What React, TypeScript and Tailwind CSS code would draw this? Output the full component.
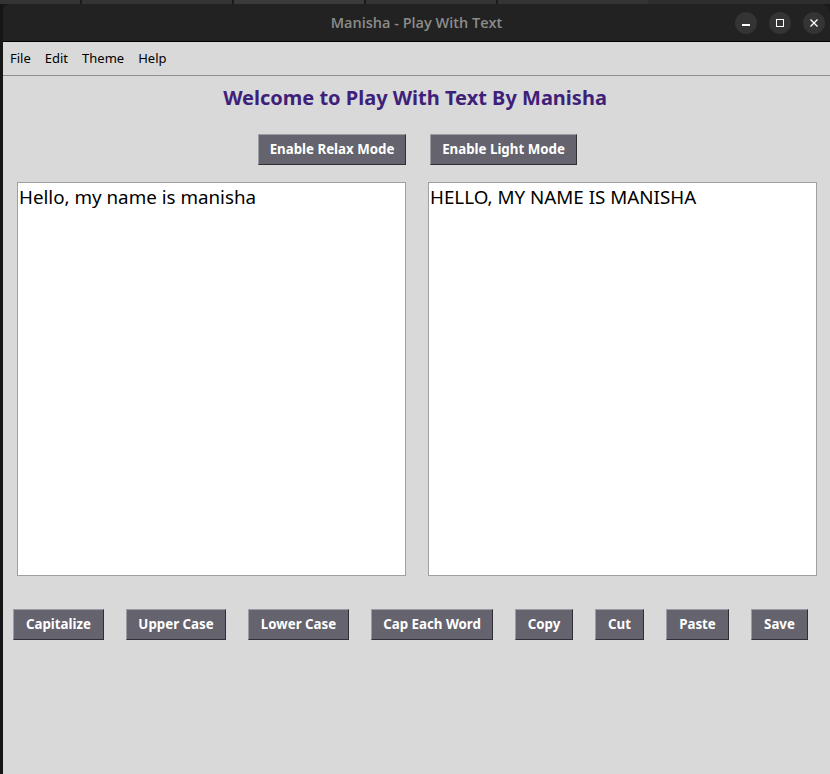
import React from "react";

const font = { fontFamily: '"Noto Sans", "Open Sans", sans-serif' };

function Btn({ label, w }: { label: string; w: string }) {
  return (
    <div
      className={`${w} h-[31px] flex items-center justify-center bg-[#64636e] text-white text-[13.3px] font-bold border border-t-[#9c9ca4] border-l-[#9c9ca4] border-b-[#2f2f36] border-r-[#2f2f36]`}
    >
      {label}
    </div>
  );
}

export default function App() {
  return (
    <div className="w-[830px] h-[774px] bg-[#1b1b1b] flex flex-col overflow-hidden" style={font}>
      <div className="h-[4px] flex bg-[#2e2e2e]">
        <div className="w-[80px] bg-[#343434]" />
        <div className="w-[2px] bg-[#1b1b1b]" />
        <div className="w-[150px] bg-[#343434]" />
        <div className="w-[2px] bg-[#1b1b1b]" />
        <div className="w-[130px] bg-[#3a3a3a]" />
        <div className="w-[2px] bg-[#1b1b1b]" />
        <div className="w-[130px] bg-[#343434]" />
        <div className="w-[2px] bg-[#1b1b1b]" />
        <div className="w-[150px] bg-[#343434]" />
      </div>
      <div className="flex flex-1">
        <div className="w-[3px] bg-[#161616]" />
        <div className="flex-1 flex flex-col">
          <div className="h-[37px] bg-[#222222] rounded-tl-[8px] rounded-tr-[10px] flex items-center relative">
            <div
              className="absolute left-0 right-0 text-center text-[14.5px] font-semibold text-[#8c8c8c]"
              style={{ fontFamily: '"Open Sans", "Noto Sans", sans-serif' }}
            >
              Manisha - Play With Text
            </div>
            <div className="ml-auto mr-[5px] flex gap-[12px]">
              <div className="w-[22px] h-[22px] rounded-full bg-[#343434] flex items-center justify-center">
                <div className="w-[8px] h-[1.5px] bg-white mt-[5px]" />
              </div>
              <div className="w-[22px] h-[22px] rounded-full bg-[#343434] flex items-center justify-center">
                <div className="w-[8px] h-[8px] border border-white" />
              </div>
              <div className="w-[22px] h-[22px] rounded-full bg-[#343434] flex items-center justify-center">
                <svg width="10" height="10" viewBox="0 0 10 10">
                  <path d="M1.5 1.5 L8.5 8.5 M8.5 1.5 L1.5 8.5" stroke="white" strokeWidth="1.3" />
                </svg>
              </div>
            </div>
          </div>
          <div className="h-[1px] bg-black" />
          <div className="flex-1 bg-[#d9d9d9] flex flex-col">
            <div className="h-[33px] flex items-center gap-[14px] pl-[7px] text-[13px] text-black pt-[1px]">
              <span>File</span>
              <span>Edit</span>
              <span>Theme</span>
              <span>Help</span>
            </div>
            <div className="h-[1px] bg-[#8f8f8f]" />
            <div className="mt-[8px] text-center text-[20px] font-bold text-[#3e1f79] leading-[28px] pr-[3px]">
              Welcome to Play With Text By Manisha
            </div>
            <div className="mt-[22px] flex justify-center gap-[24px] pl-[2px]">
              <Btn label="Enable Relax Mode" w="w-[148px]" />
              <Btn label="Enable Light Mode" w="w-[147px]" />
            </div>
            <div className="mt-[17px] flex gap-[22px] pl-[14px]">
              <div className="w-[389px] h-[394px] bg-white border border-[#a0a0a0] text-[18.8px] leading-[28px] text-black px-[1px] pt-0">
                Hello, my name is manisha
              </div>
              <div className="w-[389px] h-[394px] bg-white border border-[#a0a0a0] text-[18.8px] leading-[28px] text-black px-[1px] pt-0">
                HELLO, MY NAME IS MANISHA
              </div>
            </div>
            <div className="mt-[33px] flex gap-[22px] pl-[10px]">
              <Btn label="Capitalize" w="w-[91px]" />
              <Btn label="Upper Case" w="w-[100px]" />
              <Btn label="Lower Case" w="w-[101px]" />
              <Btn label="Cap Each Word" w="w-[122px]" />
              <Btn label="Copy" w="w-[58px]" />
              <Btn label="Cut" w="w-[49px]" />
              <Btn label="Paste" w="w-[63px]" />
              <Btn label="Save" w="w-[57px]" />
            </div>
          </div>
        </div>
      </div>
    </div>
  );
}
